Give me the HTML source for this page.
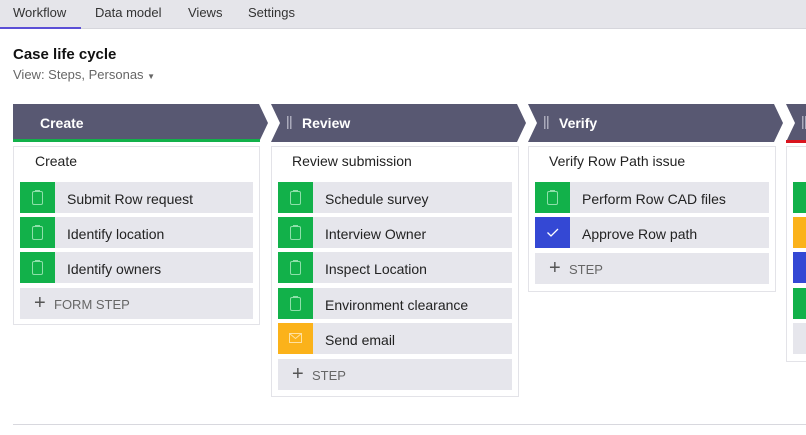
<!DOCTYPE html>
<html><head><meta charset="utf-8"><style>
*{margin:0;padding:0;box-sizing:border-box}
body{width:806px;height:435px;overflow:hidden;background:#fff;font-family:"Liberation Sans",sans-serif;color:#222;position:relative}
.tabs{position:absolute;left:0;top:0;width:806px;height:29px;background:#e5e5ea;border-bottom:1px solid #d6d6dc}
.tab{position:absolute;top:5px;font-size:13px;color:#333}
.ul{position:absolute;left:0;top:27px;width:81px;height:2px;background:#5b4fd6}
.abs{position:absolute}
.card{position:absolute;background:#fff;border:1px solid #e3e3e8}
.ct{position:absolute;font-size:14px;color:#222}
.row{position:absolute;height:31px;background:#e6e6ec;font-size:14px;color:#222}
.row .ic{position:absolute;left:0;top:0;width:35px;height:31px}
.row span{position:absolute;left:47px;top:9px;white-space:nowrap}
.add{position:absolute;height:31px;background:#e6e6ec;font-size:13px;color:#666}
.add .pl{position:absolute;left:14px;top:4px;font-size:20px;font-weight:300;color:#555}
.add .tx{position:absolute;left:34px;top:9px;white-space:nowrap}
.hd{position:absolute;top:115px;color:#fff;font-size:14px;font-weight:bold}
.g{background:#12b14a}.o{background:#fbb21a}.b{background:#3448d4}
</style></head><body>
<div class="tabs">
<div class="tab" style="left:13px">Workflow</div>
<div class="tab" style="left:95px">Data model</div>
<div class="tab" style="left:188px">Views</div>
<div class="tab" style="left:248px">Settings</div>
<div class="ul"></div>
</div>
<div class="abs" style="left:13px;top:46px;font-size:15px;font-weight:bold;color:#111">Case life cycle</div>
<div class="abs" style="left:13px;top:67px;font-size:13px;color:#666">View: Steps, Personas <span style="font-size:8px">▼</span></div>

<svg class="abs" style="left:0;top:0" width="806" height="150">
<polygon points="13,104 259,104 268,123 259,142 13,142" fill="#585872"/>
<rect x="13" y="139" width="247" height="3" fill="#12b14a"/>
<polygon points="271,104 517,104 526,123 517,142 271,142 280,123" fill="#585872"/>
<polygon points="528,104 774,104 783,123 774,142 528,142 537,123" fill="#585872"/>
<polygon points="786,104 806,104 806,142 786,142 795,123" fill="#585872"/>
<rect x="786" y="140" width="20" height="3" fill="#d9141e"/>
<g fill="#aaaabb">
<rect x="287" y="116" width="1.5" height="13" /><rect x="290" y="116" width="1.5" height="13"/>
<rect x="544" y="116" width="1.5" height="13" /><rect x="547" y="116" width="1.5" height="13"/>
<rect x="802" y="116" width="1.5" height="13" /><rect x="805" y="116" width="1.5" height="13"/>
</g>
</svg>
<div class="hd" style="left:40px">Create</div>
<div class="hd" style="left:302px">Review</div>
<div class="hd" style="left:559px">Verify</div>

<div class="card" style="left:13px;top:146px;width:247px;height:179px"></div>
<div class="ct" style="left:35px;top:153px">Create</div>
<div class="card" style="left:271px;top:146px;width:248px;height:251px"></div>
<div class="ct" style="left:292px;top:153px">Review submission</div>
<div class="card" style="left:528px;top:146px;width:248px;height:146px"></div>
<div class="ct" style="left:549px;top:153px">Verify Row Path issue</div>
<div class="card" style="left:786px;top:146px;width:30px;height:216px"></div>

<svg width="0" height="0" style="position:absolute"><defs>
<symbol id="clip" viewBox="0 0 35 31"><rect x="12.5" y="9.5" width="10" height="13" rx="1.5" fill="none" stroke="#8ee0aa" stroke-width="1"/><rect x="15" y="8" width="5" height="2" fill="#8ee0aa"/></symbol>
<symbol id="mail" viewBox="0 0 35 31"><rect x="11.5" y="10.5" width="12" height="9" fill="none" stroke="#ffe1a0" stroke-width="1"/><path d="M11.5 10.5 L17.5 15.5 L23.5 10.5" fill="none" stroke="#ffe1a0"/></symbol>
<symbol id="chk" viewBox="0 0 35 31"><path d="M12.5 15.5 L16 19 L23 12" fill="none" stroke="#fff" stroke-width="1.3"/></symbol>
</defs></svg>

<div class="row" style="left:20px;top:182px;width:233px"><svg class="ic g"><use href="#clip"/></svg><span>Submit Row request</span></div>
<div class="row" style="left:20px;top:217px;width:233px"><svg class="ic g"><use href="#clip"/></svg><span>Identify location</span></div>
<div class="row" style="left:20px;top:252px;width:233px"><svg class="ic g"><use href="#clip"/></svg><span>Identify owners</span></div>
<div class="add" style="left:20px;top:288px;width:233px"><div class="pl">+</div><div class="tx">FORM STEP</div></div>

<div class="row" style="left:278px;top:182px;width:234px"><svg class="ic g"><use href="#clip"/></svg><span>Schedule survey</span></div>
<div class="row" style="left:278px;top:217px;width:234px"><svg class="ic g"><use href="#clip"/></svg><span>Interview Owner</span></div>
<div class="row" style="left:278px;top:252px;width:234px"><svg class="ic g"><use href="#clip"/></svg><span>Inspect Location</span></div>
<div class="row" style="left:278px;top:288px;width:234px"><svg class="ic g"><use href="#clip"/></svg><span>Environment clearance</span></div>
<div class="row" style="left:278px;top:323px;width:234px"><svg class="ic o"><use href="#mail"/></svg><span>Send email</span></div>
<div class="add" style="left:278px;top:359px;width:234px"><div class="pl">+</div><div class="tx">STEP</div></div>

<div class="row" style="left:535px;top:182px;width:234px"><svg class="ic g"><use href="#clip"/></svg><span>Perform Row CAD files</span></div>
<div class="row" style="left:535px;top:217px;width:234px"><svg class="ic b"><use href="#chk"/></svg><span>Approve Row path</span></div>
<div class="add" style="left:535px;top:253px;width:234px"><div class="pl">+</div><div class="tx">STEP</div></div>

<div class="row g" style="left:793px;top:182px;width:20px"></div>
<div class="row o" style="left:793px;top:217px;width:20px"></div>
<div class="row b" style="left:793px;top:252px;width:20px"></div>
<div class="row g" style="left:793px;top:288px;width:20px"></div>
<div class="add" style="left:793px;top:323px;width:20px"></div>

<div class="abs" style="left:13px;top:424px;width:793px;height:1px;background:#d8d8de"></div>
</body></html>
